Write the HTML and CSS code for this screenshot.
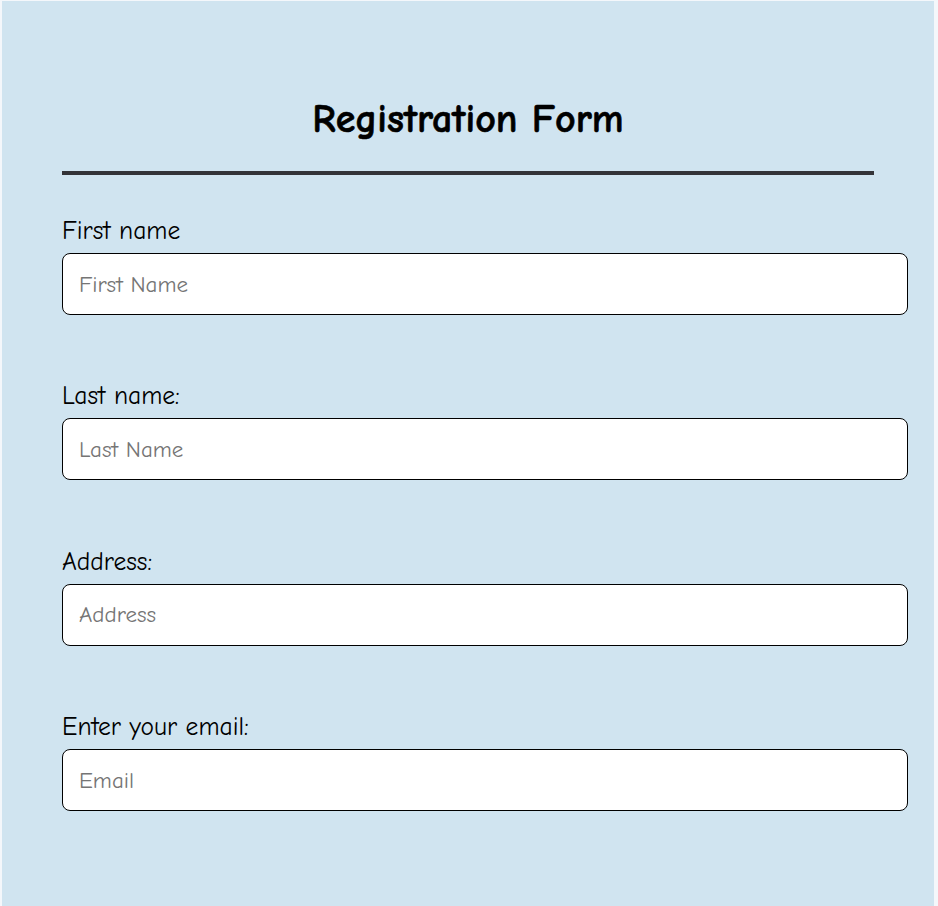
FILE: index.html
```html
<!DOCTYPE html>
<html lang="en">
<head>
<meta charset="utf-8">
<title>Registration Form</title>
<link rel="stylesheet" href="styles.css">
</head>
<body>
<div class="container">
  <h1 class="title">Registration Form</h1>
  <hr class="divider">
  <form class="form">
    <div class="field">
      <label class="label" for="first">First name</label>
      <input class="input" id="first" type="text" placeholder="First Name">
    </div>
    <div class="field">
      <label class="label" for="last">Last name:</label>
      <input class="input" id="last" type="text" placeholder="Last Name">
    </div>
    <div class="field">
      <label class="label" for="address">Address:</label>
      <input class="input" id="address" type="text" placeholder="Address">
    </div>
    <div class="field">
      <label class="label" for="email">Enter your email:</label>
      <input class="input" id="email" type="email" placeholder="Email">
    </div>
  </form>
</div>
</body>
</html>
```
FILE: styles.css
```css
html, body {
  margin: 0;
  padding: 0;
  background: #f4f7fb;
}
body {
  padding: 1px 4px 0 2px;
  font-family: "Comic Sans MS", "Comic Neue", "Open Sans", sans-serif;
}
.container {
  background: #d0e4f0;
  padding: 98px 60px 40px 60px;
  min-height: 905px;
  box-sizing: border-box;
}
.title {
  margin: 0;
  text-align: center;
  font-size: 40px;
  line-height: 40px;
  font-weight: 900;
  color: #000;
  -webkit-text-stroke: 0.6px #000;
}
.divider {
  margin: 32px 0 0 0;
  border: 0;
  height: 4px;
  background: #333338;
}
.form {
  margin-top: 41px;
}
.field {
  margin-bottom: 66.4px;
}
.field:last-child {
  margin-bottom: 0;
}
.label {
  display: block;
  font-size: 25.5px;
  line-height: 30px;
  color: #000;
  margin-bottom: 7px;
}
.input {
  display: block;
  width: 100%;
  box-sizing: content-box;
  padding: 16px 16px;
  height: 28px;
  border: 1px solid #000;
  border-radius: 8px;
  background: #fff;
  font-family: inherit;
  font-size: 23px;
  margin: 0;
  outline: none;
}
.input::placeholder {
  color: #757575;
}
```
